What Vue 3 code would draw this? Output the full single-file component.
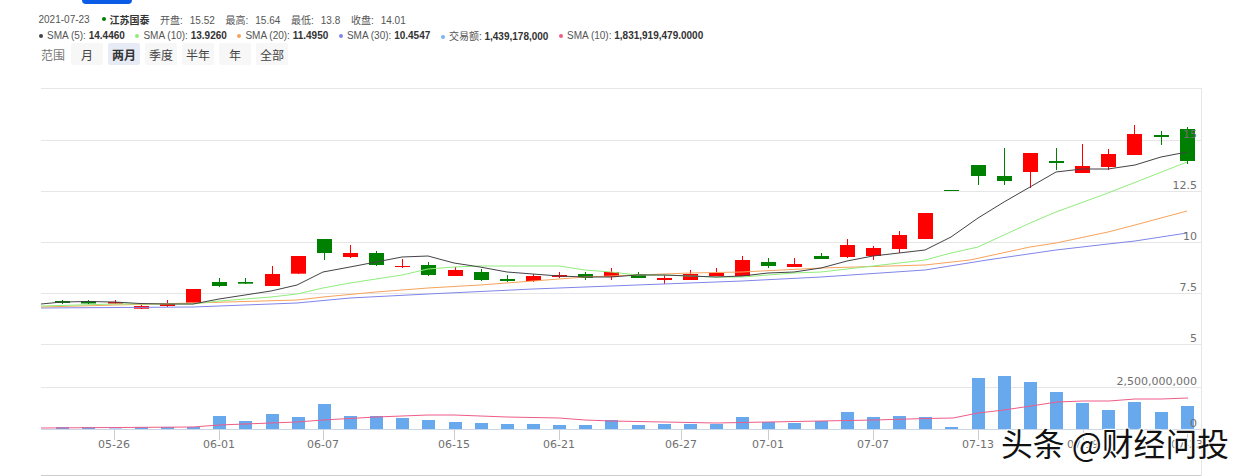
<template>
  <div class="page">
    <div class="top-btn"></div>

    <!-- INFO -->
    <div class="info">
      <span class="date">2021-07-23</span>
      <span class="dot stock"></span>
      <b class="name">江苏国泰</b>
      <span class="ohlc" v-for="item in ohlc" :key="item.label">{{ item.label }}:<span class="val">{{ item.value }}</span></span>
    </div>

    <!-- LEGEND -->
    <div class="legend">
      <span class="legend-item" v-for="item in legend" :key="item.color">
        <span class="dot" :style="{ background: item.color }"></span>{{ item.label }}: <b>{{ item.value }}</b>
      </span>
    </div>

    <!-- RANGE -->
    <div class="range">
      <span class="range-label">范围</span>
      <button
        v-for="item in ranges"
        :key="item"
        :class="{ active: item === '两月' }"
      >{{ item }}</button>
    </div>

    <!-- CHART -->
    <div class="chart-wrap">
      <svg class="chart" width="1242" height="406" viewBox="0 70 1242 406">
        <line v-for="y in grid" :key="y" x1="41" x2="1201" :y1="y + 0.5" :y2="y + 0.5" stroke="#e6e6e6" />
        <line x1="41" x2="1201" y1="429.5" y2="429.5" stroke="#c8d6e8" />
        <line x1="41" x2="1201" y1="475.5" y2="475.5" stroke="#cccccc" />
        <line x1="1201.5" x2="1201.5" y1="88" y2="476" stroke="#e6e6e6" />

        <g v-for="t in xLabels" :key="t.text">
          <line :x1="t.x + 0.5" :x2="t.x + 0.5" y1="430" y2="440" stroke="#cccccc" />
          <text :x="t.x" y="448" text-anchor="middle" class="axis">{{ t.text }}</text>
        </g>

        <!-- candles -->
        <g v-for="(c, i) in candles" :key="i">
          <line :x1="cx(i)" :x2="cx(i)" :y1="c[1]" :y2="c[4]" :stroke="c[0] === 'g' ? '#008000' : '#ff0000'" />
          <rect :x="cx(i) - 7.5" :y="c[2]" width="15" :height="c[3] - c[2]" :fill="c[0] === 'g' ? '#008000' : '#ff0000'" />
        </g>

        <polyline v-for="l in lines" :key="l.color" :points="l.points" fill="none" :stroke="l.color" stroke-width="1" />

        <!-- volume -->
        <rect
          v-for="(h, i) in volume"
          :key="'v' + i"
          :x="cx(i) - 6.5"
          :y="429 - h"
          width="13"
          :height="h"
          fill="#68a9ee"
        />
        <polyline :points="volLine" fill="none" stroke="#ee5c88" stroke-width="1" />

        <!-- y labels sit on top of the candles -->
        <text v-for="l in yLabels" :key="l.text" x="1197" :y="l.y" text-anchor="end" class="axis">{{ l.text }}</text>
      </svg>

      <div class="watermark">头条 @财经问投</div>
    </div>
  </div>
</template>

<script setup>
const ohlc = [
  { label: '开盘', value: '15.52' },
  { label: '最高', value: '15.64' },
  { label: '最低', value: '13.8' },
  { label: '收盘', value: '14.01' }
]

const legend = [
  { label: 'SMA (5)', value: '14.4460', color: '#434348' },
  { label: 'SMA (10)', value: '13.9260', color: '#90ed7d' },
  { label: 'SMA (20)', value: '11.4950', color: '#f7a35c' },
  { label: 'SMA (30)', value: '10.4547', color: '#8085e9' },
  { label: '交易额', value: '1,439,178,000', color: '#7cb5ec' },
  { label: 'SMA (10)', value: '1,831,919,479.0000', color: '#f15c80' }
]

const ranges = ['月', '两月', '季度', '半年', '年', '全部']

const grid = [88, 140, 191, 242, 293, 344, 387]

const yLabels = [
  { text: '15', y: 138 },
  { text: '12.5', y: 189 },
  { text: '10', y: 240 },
  { text: '7.5', y: 291 },
  { text: '5', y: 342 },
  { text: '2,500,000,000', y: 385 },
  { text: '0', y: 427 }
]

const xLabels = [
  { text: '05-26', x: 114 },
  { text: '06-01', x: 219 },
  { text: '06-07', x: 323 },
  { text: '06-15', x: 454 },
  { text: '06-21', x: 559 },
  { text: '06-27', x: 681 },
  { text: '07-01', x: 768 },
  { text: '07-07', x: 873 },
  { text: '07-13', x: 978 },
  { text: '07-19', x: 1083 },
  { text: '07-23', x: 1187 }
]

function cx(i) {
  return Math.round(62.3 + 26.15 * i) + 0.5
}

// color, wick top, body top, body bottom, wick bottom
const candles = [
  ['g', 300, 301, 303, 304], ['g', 300, 301, 303.5, 304], ['r', 300, 302, 303.7, 304],
  ['r', 305, 306, 308.7, 309], ['r', 300, 303.7, 306, 307], ['r', 289, 289, 302.7, 303],
  ['g', 278, 282, 286, 287], ['g', 278, 282, 283.7, 284], ['r', 266, 274, 286, 286],
  ['r', 256, 256, 273.7, 274], ['g', 239, 239, 253, 260], ['r', 245, 253, 257, 258],
  ['g', 251, 253, 265, 266], ['r', 259, 266, 267, 268], ['g', 262, 265, 275, 276],
  ['r', 267, 270, 276, 276], ['g', 269, 272, 280, 281], ['g', 275, 279, 281, 282],
  ['r', 274, 276, 281, 282], ['r', 272, 275, 277, 278], ['g', 272, 274, 278, 280],
  ['r', 268, 272, 277, 280], ['g', 272, 274, 278, 278], ['r', 275, 278, 280, 284],
  ['r', 270, 274, 280, 280], ['r', 268, 273, 276, 276], ['r', 256, 260, 276, 276],
  ['g', 258, 262, 266, 268], ['r', 258, 264, 267, 267], ['g', 253, 256, 259, 259],
  ['r', 239, 245, 257, 258], ['r', 246, 248, 256, 260], ['r', 231, 235, 249, 253],
  ['r', 213, 213, 239, 239], ['g', 190, 190, 191, 191], ['g', 165, 165, 176, 185],
  ['g', 148, 176, 181, 185], ['r', 153, 153, 172, 188], ['g', 148, 161, 163, 170],
  ['r', 144, 166, 173, 173], ['r', 149, 154, 167, 170], ['r', 125, 134, 155, 155],
  ['g', 131, 135, 137, 145], ['g', 127, 129, 161, 164]
]

const lines = [
  {
    color: '#8085e9',
    points: '41,308 193,307 297,303 350,298 428,294 533,289 637,285 742,281 821,277 925,270 987,260 1056,250 1108,244 1135,241 1187,233'
  },
  {
    color: '#f7a35c',
    points: '41,307 193,303 297,300 323,297 376,292 428,288 480,285 533,281 585,277 637,275 690,273 742,272 821,268 925,265 970,260 1030,247 1056,243 1108,232 1135,225 1187,211'
  },
  {
    color: '#90ed7d',
    points: '41,306 114,304 193,304 219,301 245,299 271,297 297,294 323,288 350,283 376,279 402,275 428,269 454,267 480,266 533,266 559,266 585,270 611,272 637,275 664,275 690,276 716,277 742,277 768,275 794,273 821,272 873,266 899,263 925,260 951,253 978,247 1004,235 1030,223 1056,212 1108,193 1187,162'
  },
  {
    color: '#434348',
    points: '41,304 62,302 88,301.5 114,302 140,303.5 166,304 193,304 219,299 245,295 271,291 297,285 323,272 350,267 376,262 402,257 428,256 454,263 480,267 507,272 533,274 559,276 585,277 611,277 637,275 664,275 690,276 716,277 742,276 768,273 794,272 821,268 847,261 873,256 899,253 925,250 951,237 978,218 1004,202 1030,187 1056,172 1082,169 1108,169 1135,165 1161,157 1187,152'
  }
]

const volume = [
  2, 2, 0.5, 2, 2, 2, 13, 8, 15, 12, 25, 13, 13, 11, 9,
  7, 6, 5, 5, 4, 4, 9, 4, 5, 5, 5, 12, 7, 6, 8,
  17, 12, 13, 12, 2, 51, 53, 47, 37, 26, 19, 27, 17, 23
]

const volLine = '41,428 193,427 219,425 297,422 323,420 376,417 428,415 454,415 507,417 559,418 585,420 611,421 664,422 716,423 768,422 821,421 874,420 926,418.5 953,418 978,413 1004,410 1031,406 1057,402 1083,401 1109,401 1135,399 1161,399 1188,398'
</script>

<style>
body {
  margin: 0;
  background: #ffffff;
}
</style>

<style scoped>
.page {
  width: 1242px;
  height: 476px;
  overflow: hidden;
  color: #333333;
  font-family: "Liberation Sans", "Noto Sans CJK SC", sans-serif;
  font-size: 10px;
}

.top-btn {
  width: 50px;
  height: 4px;
  margin-left: 82px;
  background: #0a5ce6;
  border-radius: 0 0 4px 4px;
}

.info {
  display: flex;
  align-items: center;
  height: 14px;
  margin-top: 8px;
  padding-left: 38.5px;
  color: #555555;
}

.date {
  width: 63px;
}

.dot {
  display: inline-block;
  width: 4px;
  height: 4px;
  border-radius: 50%;
  margin-right: 4px;
  vertical-align: 1px;
}

.dot.stock {
  background: #008000;
}

.name {
  width: 50.5px;
  color: #333333;
}

.ohlc {
  margin-right: 10.7px;
}

.val {
  margin-left: 7px;
}

.legend {
  display: flex;
  align-items: center;
  height: 14px;
  margin-top: 2px;
  padding-left: 39px;
}

.legend-item {
  margin-right: 10.6px;
  color: #555555;
}

.legend-item b {
  color: #333333;
}

.range {
  display: flex;
  align-items: center;
  gap: 5px;
  margin-top: 1px;
  padding-left: 41px;
}

.range-label {
  width: 25px;
  font-size: 12px;
  color: #777777;
}

button {
  width: 32px;
  height: 22px;
  padding: 0;
  border: none;
  border-radius: 2px;
  background: #f7f7f7;
  color: #444444;
  font-family: inherit;
  font-size: 12px;
}

button.active {
  background: #e6ebf5;
  color: #333333;
  font-weight: bold;
}

.chart-wrap {
  position: relative;
  margin-top: 5px;
}

.chart {
  display: block;
}

.axis {
  font-family: "DejaVu Sans", sans-serif;
  font-size: 11px;
  fill: #707070;
}

.watermark {
  position: absolute;
  left: 1001px;
  top: 352px;
  font-family: "Noto Sans CJK SC", sans-serif;
  font-size: 31.8px;
  line-height: 40px;
  white-space: nowrap;
  color: #111111;
  text-shadow: 1px 1px 1px #ffffff, -1px -1px 1px #ffffff, 1px -1px 1px #ffffff, -1px 1px 1px #ffffff;
}
</style>
